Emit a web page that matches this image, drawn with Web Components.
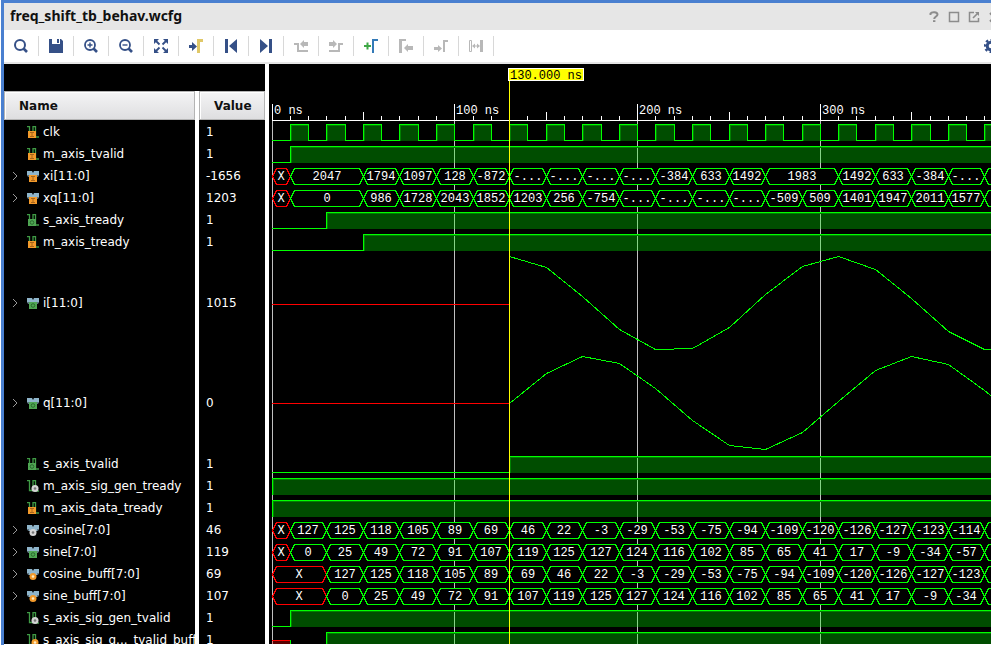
<!DOCTYPE html>
<html lang="en">
<head>
<meta charset="utf-8">
<title>freq_shift_tb_behav.wcfg</title>
<style>
html, body { margin: 0; height: 100%; }
body { background: #fff; overflow: hidden; }
</style>
</head>
<body>
<wave-window>
  <title-bar slot="title">freq_shift_tb_behav.wcfg</title-bar>
  <tool-bar slot="tools"></tool-bar>
  <signal-table slot="signals"></signal-table>
  <wave-view slot="waves"></wave-view>
</wave-window>
<script>
const NAVY = '#355087', GRAY = '#b8b8b8', GOLD = '#e0c868';

const ICONS = {
  search: `<g fill="none" stroke="${NAVY}" stroke-width="2"><circle cx="6" cy="6" r="5"/><path d="M9.5 9.5L13 13" stroke-width="2.6"/></g>`,
  save: `<path fill="${NAVY}" d="M0 0H3V5H11V0H12L14 2V14H0Z"/><path fill="${NAVY}" d="M8 0H10V4H8Z"/>`,
  zoomIn: `<g fill="none" stroke="${NAVY}" stroke-width="1.8"><circle cx="6" cy="6" r="5"/><path d="M9.5 9.5L13 13" stroke-width="2.6"/><path d="M3.5 6H8.5M6 3.5V8.5" stroke-width="1.4"/></g>`,
  zoomOut: `<g fill="none" stroke="${NAVY}" stroke-width="1.8"><circle cx="6" cy="6" r="5"/><path d="M9.5 9.5L13 13" stroke-width="2.6"/><path d="M3.5 6H8.5" stroke-width="1.4"/></g>`,
  fit: `<path fill="${NAVY}" d="M0 0H5L0 5ZM14 0V5L9 0ZM0 14V9L5 14ZM14 14H9L14 9Z"/><path d="M1 1L5.5 5.5M13 1L8.5 5.5M1 13L5.5 8.5M13 13L8.5 8.5" stroke="${NAVY}" stroke-width="1.8"/>`,
  toCursor: `<path fill="${NAVY}" d="M0 6H3V3L8 7.5L3 12V9H0Z"/><path fill="${GOLD}" d="M8 0H14V3H11V14H8Z"/>`,
  first: `<path fill="${NAVY}" d="M1 0H4V14H1ZM13 0V14L5 7Z"/>`,
  last: `<path fill="${NAVY}" d="M1 0L9 7L1 14ZM10 0H13V14H10Z"/>`,
  prevEdge: `<path fill="${GRAY}" d="M0 4H5V11H14V13H3V6H0ZM6 5L10 1V3H14V7H10V9Z"/>`,
  nextEdge: `<path fill="${GRAY}" d="M14 4H9V11H0V13H11V6H14ZM8 5L4 1V3H0V7H4V9Z"/>`,
  addMarker: `<path fill="#3fa846" d="M0 6H2.5V3.5H4.5V6H7V8H4.5V10.5H2.5V8H0Z"/><path fill="#337ab7" d="M8 0H14V2H10V14H8Z"/>`,
  prevMarker: `<path fill="${GRAY}" d="M0 0H7V2H3V14H0ZM5 9L9 5V7H14V11H9V13Z"/>`,
  nextMarker: `<path fill="${GRAY}" d="M9 1H14V3H11V13H9ZM8 9.500L4 6V8H0V11H4V13Z"/>`,
  span: `<path d="M.5 1.500H2.500V12.500H.5Z" fill="none" stroke="${GRAY}"/><path fill="${GRAY}" d="M11 1H14V13H11ZM3 7L6 4.500V6.500H8V4.500L11 7L8 9.500V7.500H6V9.500Z"/>`,
  gear: `<g fill="none" stroke="${NAVY}"><circle cx="7" cy="7" r="3.800" stroke-width="3"/><circle cx="7" cy="7" r="6" stroke-width="2.600" stroke-dasharray="2.360 2.352" stroke-dashoffset="1.180"/></g>`,
  help: `<path d="M3.500 5V3.500C4.500 1.800 10.500 1.600 10.500 4.500C10.500 6.500 7.200 6.500 7.200 9" fill="none" stroke="#8c8c8c" stroke-width="2"/><path fill="#8c8c8c" d="M6 10.200H8.400V12H6Z"/>`,
  maximize: `<path d="M2.500 2.500H11.500V11.500H2.500Z" fill="none" stroke="#8c8c8c" stroke-width="1.500"/>`,
  popout: `<path d="M7 2.500H2.500V11.500H11.500V8" fill="none" stroke="#8c8c8c" stroke-width="1.500"/><path d="M6 8L10.500 3.500" stroke="#8c8c8c" stroke-width="1.600"/><path fill="#8c8c8c" d="M8 2H12V6Z"/>`,
  close: `<path d="M3 3L11 11.500M11 3L3 11.500" stroke="#8c8c8c" stroke-width="2"/>`
};

const GREEN = '#3f9b45';
const badge = {
  in: `<path fill="#f39a2b" d="M2 5H10V12H2Z"/><path d="M4 6.500H8M6 6.500V10.500M4 10.500H8" stroke="#a8651a" fill="none"/>`,
  out: `<path fill="#4fa653" d="M2 5H10V12H2Z"/><circle cx="6" cy="8.500" r="1.800" fill="none" stroke="#2a6b2f"/>`,
  net: `<circle cx="8" cy="8.500" r="3.500" fill="#d4d4d4"/><circle cx="8" cy="8.500" r="1.300" fill="#777"/>`,
  reg: `<circle cx="8" cy="8.500" r="3.500" fill="#f39a2b"/><circle cx="8" cy="8.500" r="1.300" fill="#fff0c8"/>`
};
const isRound = k => k === 'net' || k === 'reg';
const scalarIcon = k => `<path d="M0 .5H2.500V10.500H6V.5H8.500V11H12" fill="none" stroke="${GREEN}" stroke-width="1.300"/><g${isRound(k) ? '' : ' transform="translate(-1 0)"'}>${badge[k]}</g>`;
const busIcon = k => `<path fill="#8fb5cb" d="M0 1H5L6 3L7 1H12V5L10 7H2L0 5Z"/><path fill="#5d7480" d="M0 5H2V7H1ZM10 5H12L11 7H10Z"/><g${isRound(k) ? ' transform="translate(-2 0)"' : ''}>${badge[k]}</g>`;

const seq = (start, list) => list.map((v, i) => [start + 20 * i, v]);
const cos = [127,125,118,105,89,69,46,22,-3,-29,-53,-75,-94,-109,-120,-126,-127,-123,-114,''];
const sin = [0,25,49,72,91,107,119,125,127,124,116,102,85,65,41,17,-9,-34,-57,''];
const D = '-...';

const SIGNALS = [
  { name: 'clk', value: '1', kind: 'in', type: 'clock' },
  { name: 'm_axis_tvalid', value: '1', kind: 'in', type: 'bit', rise: 10 },
  { name: 'xi[11:0]', value: '-1656', kind: 'in', type: 'bus',
    segs: [[0,'X'],[10,2047],...seq(50,[1794,1097,128,-872,D,D,D,D,-384,633,1492]),[270,1983],...seq(310,[1492,633,-384,D,''])] },
  { name: 'xq[11:0]', value: '1203', kind: 'in', type: 'bus',
    segs: [[0,'X'],[10,0],...seq(50,[986,1728,2043,1852,1203,256,-754,D,D,D,D,-509,509,1401,1947,2011,1577,''])] },
  { name: 's_axis_tready', value: '1', kind: 'out', type: 'bit', rise: 30 },
  { name: 'm_axis_tready', value: '1', kind: 'in', type: 'bit', rise: 50 },
  { name: 'i[11:0]', value: '1015', kind: 'out', type: 'analog', flat: 52,
    points: [4,15,44,77,97,96,75,42,14,4,17,46,79,97,96] },
  { name: 'q[11:0]', value: '0', kind: 'out', type: 'analog', flat: 51,
    points: [51,21,4,11,36,68,93,97,80,49,18,4,12,38,68] },
  { name: 's_axis_tvalid', value: '1', kind: 'out', type: 'bit', rise: 130 },
  { name: 'm_axis_sig_gen_tready', value: '1', kind: 'net', type: 'bit', rise: 0 },
  { name: 'm_axis_data_tready', value: '1', kind: 'in', type: 'bit', rise: 0 },
  { name: 'cosine[7:0]', value: '46', kind: 'net', type: 'bus', segs: [[0,'X'],...seq(10,cos)] },
  { name: 'sine[7:0]', value: '119', kind: 'out', type: 'bus', segs: [[0,'X'],...seq(10,sin)] },
  { name: 'cosine_buff[7:0]', value: '69', kind: 'reg', type: 'bus', segs: [[0,'X'],...seq(30,cos.slice(0,18).concat(''))] },
  { name: 'sine_buff[7:0]', value: '107', kind: 'reg', type: 'bus', segs: [[0,'X'],...seq(30,sin.slice(0,18).concat(''))] },
  { name: 's_axis_sig_gen_tvalid', value: '1', kind: 'net', type: 'bit', rise: 10 },
  { name: 's_axis_sig_g..._tvalid_buff', value: '1', kind: 'reg', type: 'bit', rise: 30, unknown: 10 }
];

class Base extends HTMLElement {
  constructor() { super(); this.attachShadow({ mode: 'open' }); }
  connectedCallback() { this.shadowRoot.innerHTML = this.render(); }
}

customElements.define('icon-button', class extends Base {
  render() {
    return `<style>
      :host { display: flex; flex: none; width: 34px; }
      button { all: unset; display: flex; flex: 1; align-items: center; justify-content: center; }
      svg { display: block; width: 14px; height: 14px; }
    </style><button type="button" aria-label="${this.getAttribute('label')}"${this.hasAttribute('disabled') ? ' disabled' : ''}><svg viewBox="0 0 14 14">${ICONS[this.getAttribute('icon')]}</svg></button>`;
  }
});

customElements.define('title-bar', class extends Base {
  render() {
    return `<style>
      :host { display: flex; align-items: center; height: 27px; background: #e6e6e6; overflow: hidden; color: #111; font: bold 14px/24px "Noto Sans", "DejaVu Sans", sans-serif; }
      .name { flex: 1; padding: 0 0 2px 6px; white-space: nowrap; }
      .actions { display: flex; flex: none; margin-right: -13px; }
      icon-button { width: 20px; }
    </style><span class="name"><slot></slot></span>
    <div class="actions">
      <icon-button icon="help" label="Help"></icon-button>
      <icon-button icon="maximize" label="Maximize"></icon-button>
      <icon-button icon="popout" label="Float"></icon-button>
      <icon-button icon="close" label="Close"></icon-button>
    </div>`;
  }
});

customElements.define('tool-bar', class extends Base {
  render() {
    const tools = [['search','Find'],['save','Save'],['zoomIn','Zoom in'],['zoomOut','Zoom out'],['fit','Zoom fit'],
      ['toCursor','Go to cursor'],['first','Go to time 0'],['last','Go to last time'],['prevEdge','Previous transition',1],
      ['nextEdge','Next transition',1],['addMarker','Add marker'],['prevMarker','Previous marker',1],['nextMarker','Next marker',1],['span','Swap cursors',1]];
    return `<style>
      :host { display: flex; align-items: center; height: 32px; background: #fff; border-bottom: 2px solid #e6e6e6; overflow: hidden; }
      .tool { height: 20px; border-right: 1px solid #d8d8d8; }
      .settings { margin: 0 -17px 0 auto; }
    </style>${tools.map(([i, l, d]) => `<icon-button class="tool" icon="${i}" label="${l}"${d ? ' disabled' : ''}></icon-button>`).join('')}
    <icon-button class="settings" icon="gear" label="Settings"></icon-button>`;
  }
});

customElements.define('signal-table', class extends Base {
  render() {
    const rows = SIGNALS.map(s => {
      const bus = s.type === 'bus' || s.type === 'analog';
      return `<tr class="${s.type === 'analog' ? 'tall' : ''}"><td><div class="cell">
        <svg class="chev" viewBox="0 0 6 10">${bus ? '<path d="M1 1L5 5L1 9" fill="none" stroke="#999"/>' : ''}</svg>
        <svg class="icon" viewBox="0 0 12 12">${bus ? busIcon(s.kind) : scalarIcon(s.kind)}</svg><span>${s.name}</span></div></td><td class="val">${s.value}</td></tr>`;
    }).join('');
    return `<style>
      :host { display: block; width: 261px; background: #000; overflow: hidden; border-right: 4px solid #fff; color: #fff; font: 12px/20px "DejaVu Sans", sans-serif; }
      table { margin-top: 27px; width: 100%; table-layout: fixed; border-collapse: separate; border-spacing: 0; }
      th { box-sizing: border-box; height: 29px; padding: 0 0 0 14px; background: linear-gradient(#f4f4f5, #dedee0); border: 1px solid #b4b4b4; box-shadow: inset 1px 1px #fff; color: #111; font-weight: bold; text-align: left; }
      col.n { width: 191px; } col.g { width: 4px; }
      td { box-sizing: border-box; padding: 2px 0 0; height: 22px; overflow: hidden; white-space: nowrap; vertical-align: middle; }
      .gap { background: #fff; padding: 0; }
      .tall td { height: 100px; }
      .val { padding-left: 7px; }
      .cell { display: flex; align-items: center; padding-left: 8px; }
      .chev { flex: none; width: 6px; height: 10px; margin-right: 9px; }
      .icon { flex: none; width: 12px; height: 12px; margin-right: 4px; }
    </style><table>
      <colgroup><col class="n"><col class="g"><col></colgroup>
      <tbody><tr><th scope="col">Name</th><td class="gap" rowspan="${SIGNALS.length + 1}"></td><th scope="col">Value</th></tr>
      ${rows}</tbody></table>`;
  }
});

customElements.define('wave-view', class extends Base {
  connectedCallback() {
    super.connectedCallback();
    addEventListener('resize', () => { this.shadowRoot.innerHTML = this.render(); });
  }
  render() {
    const X = t => 3 + Math.floor(t * 1.828);
    const END = Math.max(200, innerWidth - 269), TOP = 56, N = Math.floor((END - 3) / 1.828);
    const H = (x, y, w, c) => `<rect x="${x}" y="${y}" width="${w}" height="1" fill="${c}"/>`;
    const V = (x, y, h, c) => `<rect x="${x}" y="${y}" width="1" height="${h}" fill="${c}"/>`;
    const L = '#00ff00', R = '#ff0000';
    let out = '', ruler = H(3, TOP, END, '#fff');
    for (let t = 0; t <= N; t += 10) {
      const h = t % 100 === 0 ? 16 : t % 50 === 0 ? 8 : 4;
      ruler += V(X(t), TOP - h, h, '#fff');
      if (t % 100 === 0) {
        out += V(X(t), TOP + 1, 1000, '#c0c0c0');
        ruler += `<text x="${X(t) + 2}" y="50">${t} ns</text>`;
      }
    }
    const high = (x, y, w) => `<rect x="${x}" y="${y + 4}" width="${w}" height="17" fill="rgba(0,255,0,.3)"/>` +
      H(x, y + 5, w, '#008000') + V(x + 1, y + 5, 16, '#008000') + H(x, y + 4, w, L) + V(x, y + 4, 17, L);
    let y = TOP;
    for (const s of SIGNALS) {
      if (s.type === 'clock') {
        for (let t = 0; t < N; t += 20) {
          const a = X(t), b = X(t + 10), c = X(t + 20);
          out += H(a, y + 20, b - a + 1, L) + high(b, y, c - b) + V(c, y + 4, 17, L);
        }
      } else if (s.type === 'bit') {
        const x = X(s.rise);
        let from = 3;
        if (s.unknown) {
          const u = X(s.unknown);
          out += `<rect x="3" y="${y + 12}" width="${u - 3}" height="9" fill="rgba(255,0,0,.35)"/>` + H(3, y + 12, u - 3, R) + V(u, y + 12, 9, L);
          from = u;
        }
        if (x > from) out += H(from, y + 20, x - from, L);
        out += high(x, y, END);
      } else if (s.type === 'bus') {
        s.segs.forEach(([t, v], i) => {
          const a = X(t) + .5, b = (i + 1 < s.segs.length ? X(s.segs[i + 1][0]) : END + 40) + .5;
          const t1 = y + 4.5, m = y + 12.5, b1 = y + 20.5;
          out += `<path d="M${a} ${m}L${a + 4} ${t1}H${b - 4}L${b} ${m}L${b - 4} ${b1}H${a + 4}Z" fill="#000" stroke="${v === 'X' ? R : L}" shape-rendering="crispEdges"/>`;
          if (v !== '') out += `<text x="${Math.floor((a + b) / 2)}" y="${y + 16}" text-anchor="middle">${v}</text>`;
        });
      } else {
        out += H(3, y + s.flat, X(130) - 3, R);
        out += `<polyline fill="none" stroke="${L}" shape-rendering="crispEdges" points="${s.points.map((p, i) => `${X(130 + 20 * i) + .5},${y + p + .5}`).join(' ')}"/>`;
      }
      y += s.type === 'analog' ? 100 : 22;
    }
    const cx = X(130);
    return `<style>
      :host { display: block; flex: 1; min-width: 0; background: #000; overflow: hidden; }
      svg { display: block; width: 100%; height: 100%; overflow: hidden; }
      text { font: 12px "Liberation Mono", monospace; fill: #fff; }
      .cursor { fill: #000; }
    </style><svg role="img" aria-label="Waveforms">${out}${ruler}
      ${V(cx, 17, 1000, '#ffff00')}
      <rect x="${cx - 1}" y="4" width="75" height="12" fill="#ffff00" stroke="#fff" shape-rendering="crispEdges"/>
      <text class="cursor" x="${cx + 1}" y="15">130.000 ns</text></svg>`;
  }
});

customElements.define('wave-window', class extends Base {
  render() {
    return `<style>
      :host { display: flex; flex-direction: column; box-sizing: border-box; height: 100vh; margin-left: 1px; padding-bottom: 1px; border-top: 3px solid #4a80d0; border-left: 3px solid #4a80d0; overflow: hidden; }
      ::slotted([slot="title"]), ::slotted([slot="tools"]) { flex: none; }
      .body { display: flex; flex: 1; min-height: 0; }
      ::slotted([slot="signals"]) { flex: none; }
    </style><slot name="title"></slot><slot name="tools"></slot>
    <div class="body"><slot name="signals"></slot><slot name="waves"></slot></div>`;
  }
});
</script>
</body>
</html>
